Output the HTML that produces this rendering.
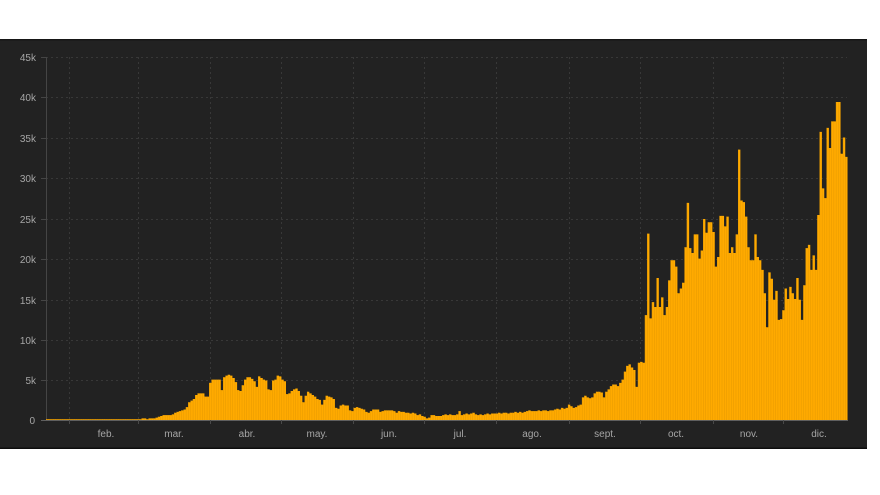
<!DOCTYPE html>
<html lang="es">
<head>
<meta charset="utf-8">
<title>Gráfico</title>
<style>
html,body{margin:0;padding:0;background:#fff;width:880px;height:495px;overflow:hidden}
svg{display:block}
text{font-family:"Liberation Sans",sans-serif;font-size:10px;fill:#a6a6a6}
</style>
</head>
<body>
<svg width="880" height="495" viewBox="0 0 880 495" xmlns="http://www.w3.org/2000/svg">
<defs>
<filter id="s" x="0" y="0" width="100%" height="100%"><feGaussianBlur stdDeviation="0.35"/></filter>
<path id="b" transform="translate(46,420) scale(2.33,-0.807)" d="M0 0V1h39V1h1V1h1V2h1V2h1V1h1V2h1V2h1V2h1V3h1V4h1V5h1V6h1V6h1V6h1V6h1V7h1V9h1V10h1V11h1V12h1V13h1V16h1V22h1V24h1V26h1V31h1V33h1V33h1V33h1V29h1V29h1V46h1V50h1V50h1V50h1V50h1V37h1V53h1V55h1V56h1V55h1V52h1V47h1V37h1V36h1V43h1V50h1V53h1V53h1V51h1V48h1V41h1V54h1V52h1V50h1V49h1V38h1V37h1V49h1V50h1V55h1V54h1V50h1V48h1V32h1V33h1V36h1V38h1V39h1V36h1V30h1V22h1V30h1V35h1V33h1V31h1V29h1V26h1V25h1V19h1V25h1V30h1V29h1V28h1V26h1V15h1V14h1V18h1V19h1V18h1V18h1V12h1V11h1V15h1V16h1V15h1V14h1V13h1V10h1V9h1V11h1V13h1V13h1V13h1V10h1V11h1V12h1V12h1V12h1V12h1V11h1V9h1V11h1V10h1V10h1V9h1V9h1V8h1V9h1V8h1V6h1V7h1V5h1V4h1V2h1V3h1V6h1V6h1V5h1V5h1V5h1V6h1V7h1V6h1V7h1V6h1V6h1V7h1V11h1V6h1V7h1V8h1V7h1V8h1V9h1V7h1V6h1V7h1V6h1V7h1V8h1V7h1V8h1V8h1V8h1V9h1V8h1V9h1V9h1V8h1V9h1V9h1V10h1V9h1V10h1V9h1V10h1V11h1V12h1V11h1V11h1V11h1V12h1V11h1V12h1V12h1V11h1V12h1V12h1V13h1V14h1V13h1V15h1V14h1V15h1V19h1V17h1V15h1V16h1V18h1V19h1V28h1V30h1V28h1V27h1V28h1V33h1V35h1V35h1V34h1V28h1V35h1V38h1V42h1V44h1V44h1V42h1V46h1V50h1V60h1V67h1V69h1V65h1V62h1V41h1V71h1V72h1V71h1V130h1V231h1V126h1V146h1V140h1V176h1V140h1V152h1V130h1V140h1V173h1V198h1V198h1V190h1V157h1V163h1V170h1V214h1V269h1V213h1V207h1V230h1V230h1V200h1V210h1V249h1V232h1V245h1V245h1V233h1V190h1V202h1V253h1V253h1V240h1V252h1V207h1V214h1V207h1V230h1V335h1V272h1V270h1V252h1V214h1V198h1V198h1V230h1V202h1V198h1V186h1V157h1V115h1V183h1V175h1V149h1V160h1V124h1V125h1V136h1V163h1V150h1V165h1V157h1V150h1V176h1V149h1V124h1V167h1V213h1V217h1V186h1V204h1V186h1V254h1V357h1V287h1V275h1V362h1V337h1V370h1V370h1V394h1V394h1V330h1V350h1V326h1V0Z"/>
<clipPath id="c"><use href="#b"/></clipPath>
</defs>

<g filter="url(#s)">
<!-- chart panel -->
<rect x="0" y="39" width="867" height="410" fill="#222222"/>
<rect x="0" y="39" width="867" height="1.5" fill="#161616"/>
<rect x="0" y="447.5" width="867" height="1.5" fill="#111111"/>

<!-- grid -->
<g stroke="#393939" stroke-width="1" stroke-dasharray="2 3" fill="none">
<path d="M46 57.5H847M46 97.5H847M46 138.5H847M46 178.5H847M46 219.5H847M46 259.5H847M46 300.5H847M46 340.5H847M46 380.5H847"/>
<path d="M69.5 57V420M138.5 57V420M210.5 57V420M281.5 57V420M353.5 57V420M424.5 57V420M496.5 57V420M569.5 57V420M640.5 57V420M713.5 57V420M783.5 57V420"/>
</g>

<!-- axes -->
<path d="M46.5 57V420.5" stroke="#454545" stroke-width="1" fill="none"/>
<path d="M41 420.5H848" stroke="#5e5e5e" stroke-width="1" fill="none"/>
<path d="M41 57.5H46M41 97.5H46M41 138.5H46M41 178.5H46M41 219.5H46M41 259.5H46M41 300.5H46M41 340.5H46M41 380.5H46" stroke="#454545" stroke-width="1" fill="none"/>
<path d="M69.5 420V424M138.5 420V424M210.5 420V424M281.5 420V424M353.5 420V424M424.5 420V424M496.5 420V424M569.5 420V424M640.5 420V424M713.5 420V424M783.5 420V424" stroke="#4a4a4a" stroke-width="1" fill="none"/>

<!-- bars -->
<use href="#b" fill="#ffaa00"/>
<g clip-path="url(#c)">
<line x1="46" x2="850" y1="240" y2="240" stroke="#ea9c02" stroke-width="362" stroke-dasharray="0.6 1.73"/>
</g>

<!-- y labels -->
<g text-anchor="end">
<text x="36" y="61">45k</text>
<text x="36" y="101">40k</text>
<text x="36" y="142">35k</text>
<text x="36" y="182">30k</text>
<text x="36" y="223">25k</text>
<text x="36" y="263">20k</text>
<text x="36" y="304">15k</text>
<text x="36" y="344">10k</text>
<text x="36" y="384">5k</text>
<text x="35" y="424">0</text>
</g>

<!-- x labels -->
<g text-anchor="middle">
<text x="106" y="437">feb.</text>
<text x="174" y="437">mar.</text>
<text x="247" y="437">abr.</text>
<text x="317" y="437">may.</text>
<text x="389" y="437">jun.</text>
<text x="460" y="437">jul.</text>
<text x="532" y="437">ago.</text>
<text x="605" y="437">sept.</text>
<text x="676" y="437">oct.</text>
<text x="749" y="437">nov.</text>
<text x="819" y="437">dic.</text>
</g>
</g>
</svg>
</body>
</html>
